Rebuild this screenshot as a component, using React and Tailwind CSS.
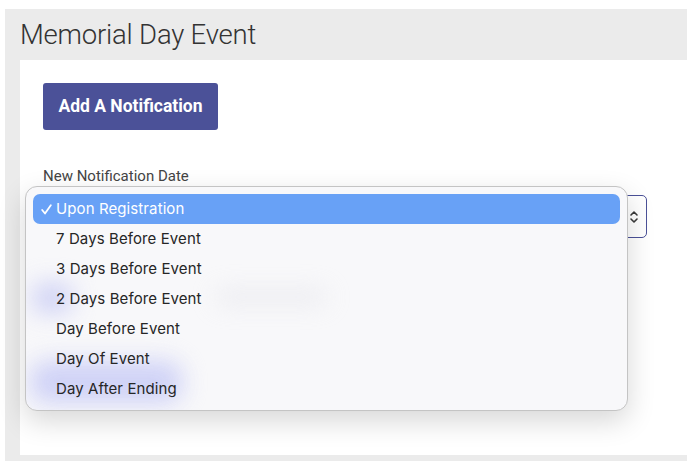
import React from "react";

const options = [
  "Upon Registration",
  "7 Days Before Event",
  "3 Days Before Event",
  "2 Days Before Event",
  "Day Before Event",
  "Day Of Event",
  "Day After Ending",
];

function UpDown() {
  return (
    <svg width="10" height="16" viewBox="0 0 10 16" fill="none" stroke="#3a3a3a" strokeWidth="1.6" strokeLinecap="round" strokeLinejoin="round">
      <path d="M2 6 L5 3 L8 6" />
      <path d="M2 10 L5 13 L8 10" />
    </svg>
  );
}

function Check() {
  return (
    <svg width="11" height="11" viewBox="0 0 11 11" fill="none" stroke="white" strokeWidth="1.8" strokeLinecap="round" strokeLinejoin="round">
      <path d="M1.2 6 L4 9.5 L9.8 1.2" />
    </svg>
  );
}

function OptionMenu() {
  return (
    <div className="absolute left-[-19px] top-[-10px] w-[603px] rounded-[12px] border border-[#c4c4c4] bg-[#f8f8fa] pt-[7px] pb-[6px] px-[7px] shadow-[0_10px_28px_rgba(0,0,0,0.16)] overflow-hidden z-10">
      {/* soft tint of the form controls showing through the menu */}
      <span className="absolute left-[6px] top-[96px] w-[40px] h-[30px] rounded-lg bg-[#c6c9f4] blur-md opacity-80" />
      <span className="absolute left-[190px] top-[104px] w-[110px] h-[12px] rounded bg-[#dcdce4] blur-md opacity-60" />
      <span className="absolute left-[4px] top-[174px] w-[152px] h-[42px] rounded-2xl bg-[#cacdf6] blur-md opacity-90" />
      <ul className="relative">
        {options.map((o, i) => (
          <li
            key={o}
            className={
              i === 0
                ? "flex items-center h-[30px] rounded-[7px] bg-[#68a1f6] text-white pl-[8px]"
                : "flex items-center h-[30px] pl-[23px] text-[#262626]"
            }
          >
            {i === 0 && (
              <span className="w-[15px] flex items-center">
                <Check />
              </span>
            )}
            <span className="text-[15px] tracking-[0.1px]">{o}</span>
          </li>
        ))}
      </ul>
    </div>
  );
}

export default function App() {
  return (
    <div className="min-h-[461px] bg-white pt-[9px] pl-[5px]" style={{ fontFamily: "Inter, Roboto, sans-serif" }}>
      <div className="bg-[#ebebeb] pl-[15px] pb-[6px]">
        <div className="h-[51px] flex items-center">
          <h1 className="text-[27.5px] font-light text-[#333] tracking-[-0.2px]" style={{ fontFamily: "Roboto, sans-serif" }}>
            Memorial Day Event
          </h1>
        </div>
        <div className="bg-white h-[395px] pl-[23px] pt-[23px] flex flex-col items-start">
          <button className="h-[47px] w-[175px] rounded-[3px] bg-[#4b5198] text-white text-[17.5px] font-bold" style={{ fontFamily: "Roboto, sans-serif" }}>
            Add A Notification
          </button>
          <div className="mt-[36px] text-[15px] leading-[20px] text-[#444]" style={{ fontFamily: "Roboto, sans-serif" }}>
            New Notification Date
          </div>
          <div className="relative mt-[9px] w-[604px] h-[43px] rounded-[5px] border border-[#4b5198] flex items-center justify-end pr-[7px]">
            <UpDown />
            <OptionMenu />
          </div>
        </div>
      </div>
    </div>
  );
}
